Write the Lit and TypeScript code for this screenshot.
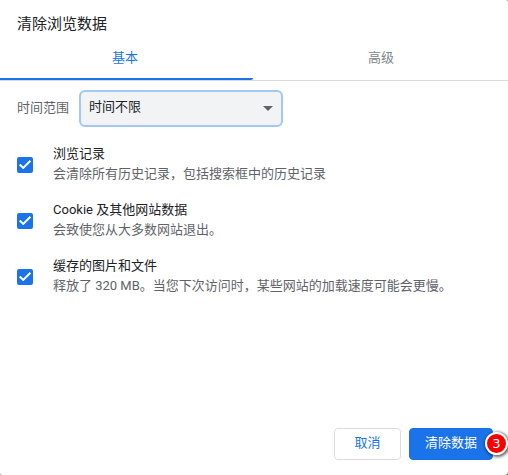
import { LitElement, html, css } from "lit";
import { customElement, state } from "lit/decorators.js";

interface DataItem {
  id: string;
  title: string;
  detail: string;
  checked: boolean;
}

@customElement("app-root")
export class AppRoot extends LitElement {
  static styles = css`
    :host {
      display: block;
      background: #808080;
      color: #202124;
      font: 13px/20px Roboto, "Noto Sans CJK SC", sans-serif;
    }
    * {
      box-sizing: border-box;
    }
    .dialog {
      display: flex;
      flex-direction: column;
      min-height: 100vh;
      overflow: hidden;
      background: #fff;
      border-radius: 0 2px 4px 2px;
    }
    .title {
      margin: 0;
      padding: 12px 17px 0;
      font-size: 15px;
      line-height: 24px;
      font-weight: 400;
    }
    .tabs {
      display: flex;
      margin: 0 -1px 0 -3px;
      border-bottom: 1px solid #dadce0;
    }
    .tab {
      flex: 1;
      height: 44px;
      padding: 2px 0 0;
      border: 0;
      border-bottom: 2px solid transparent;
      background: none;
      color: #80868b;
      font: inherit;
    }
    .tab.selected {
      color: #1a73e8;
      border-color: #1a73e8;
      border-bottom-right-radius: 2px;
    }
    .range {
      display: flex;
      align-items: center;
      gap: 10px;
      padding: 9px 17px 0;
      color: #5f6368;
    }
    .range label {
      padding-bottom: 2px;
    }
    .select-box {
      display: flex;
      align-items: center;
      width: 204px;
      height: 37px;
      border: 2px solid #a3c7f7;
      border-radius: 6px;
      background: #f1f3f4;
    }
    select {
      flex: 1;
      height: 100%;
      padding: 0 0 4px 8px;
      border: 0;
      outline: 0;
      appearance: none;
      background: none;
      color: #202124;
      font: inherit;
    }
    .arrow {
      width: 10px;
      height: 5px;
      margin-right: 8px;
      fill: #5f6368;
      pointer-events: none;
    }
    .items {
      display: flex;
      flex-direction: column;
      gap: 16px;
      padding: 18px 17px;
      flex: 1;
    }
    .item {
      display: flex;
      align-items: center;
      gap: 20px;
    }
    .item label {
      padding-bottom: 1px;
      margin-top: -1px;
    }
    .check {
      display: grid;
      flex: none;
    }
    .check > * {
      grid-area: 1 / 1;
      width: 16px;
      height: 16px;
    }
    .check input {
      margin: 0;
      appearance: none;
      border: 2px solid #5f6368;
      border-radius: 2px;
    }
    .check input:checked {
      border-color: #1a73e8;
      background: #1a73e8;
    }
    .check svg {
      fill: none;
      stroke: #fff;
      stroke-width: 2;
      pointer-events: none;
    }
    .detail {
      display: block;
      color: #5f6368;
    }
    .actions {
      display: flex;
      justify-content: flex-end;
      gap: 8px;
      padding: 15px;
    }
    .button {
      height: 32px;
      padding: 0 15px 2px;
      border: 1px solid #dadce0;
      border-radius: 4px;
      background: #fff;
      color: #1a73e8;
      font: inherit;
    }
    .cancel {
      padding: 0 19px 2px;
      width: 67px;
    }
    .primary {
      border-color: #1a73e8;
      background: #1a73e8;
      color: #fff;
    }
    .anchor {
      position: relative;
      display: flex;
    }
    .badge {
      position: absolute;
      top: 4px;
      right: -15px;
      width: 23px;
      height: 23px;
      border: 2px solid #fff;
      border-radius: 50%;
      background: #f80000;
      box-shadow: 1px 1px 3px 1px #0009;
      color: #fff;
      font: 13px/19px "DejaVu Sans", sans-serif;
      text-align: center;
    }
  `;

  @state() private tab = 0;

  @state() private items: DataItem[] = [
    { id: "history", title: "浏览记录", detail: "会清除所有历史记录，包括搜索框中的历史记录", checked: true },
    { id: "cookies", title: "Cookie 及其他网站数据", detail: "会致使您从大多数网站退出。", checked: true },
    { id: "cache", title: "缓存的图片和文件", detail: "释放了 320 MB。当您下次访问时，某些网站的加载速度可能会更慢。", checked: true },
  ];

  private toggle(id: string) {
    this.items = this.items.map((i) => (i.id === id ? { ...i, checked: !i.checked } : i));
  }

  private renderItem(item: DataItem) {
    return html`
      <div class="item">
        <span class="check">
          <input type="checkbox" id=${item.id} .checked=${item.checked} @change=${() => this.toggle(item.id)} />
          ${item.checked
            ? html`<svg viewBox="0 0 16 16" aria-hidden="true"><path d="M2.7 7.6 6.2 10.9 13.4 3.7" /></svg>`
            : null}
        </span>
        <label for=${item.id}>${item.title}<span class="detail">${item.detail}</span></label>
      </div>
    `;
  }

  render() {
    return html`
      <main class="dialog" lang="zh-CN">
        <h1 class="title">清除浏览数据</h1>
        <div class="tabs" role="tablist">
          ${["基本", "高级"].map(
            (name, i) => html`<button
              class="tab ${this.tab === i ? "selected" : ""}"
              role="tab"
              aria-selected=${this.tab === i ? "true" : "false"}
              @click=${() => (this.tab = i)}
            >${name}</button>`
          )}
        </div>
        <div class="range">
          <label for="range">时间范围</label>
          <div class="select-box">
            <select id="range">
              <option>时间不限</option>
            </select>
            <svg class="arrow" viewBox="0 0 10 5" aria-hidden="true"><path d="M0 0H10L5 5Z" /></svg>
          </div>
        </div>
        <div class="items">${this.items.map((i) => this.renderItem(i))}</div>
        <div class="actions">
          <button class="button cancel">取消</button>
          <div class="anchor">
            <button class="button primary">清除数据</button>
            <span class="badge">3</span>
          </div>
        </div>
      </main>
    `;
  }
}
